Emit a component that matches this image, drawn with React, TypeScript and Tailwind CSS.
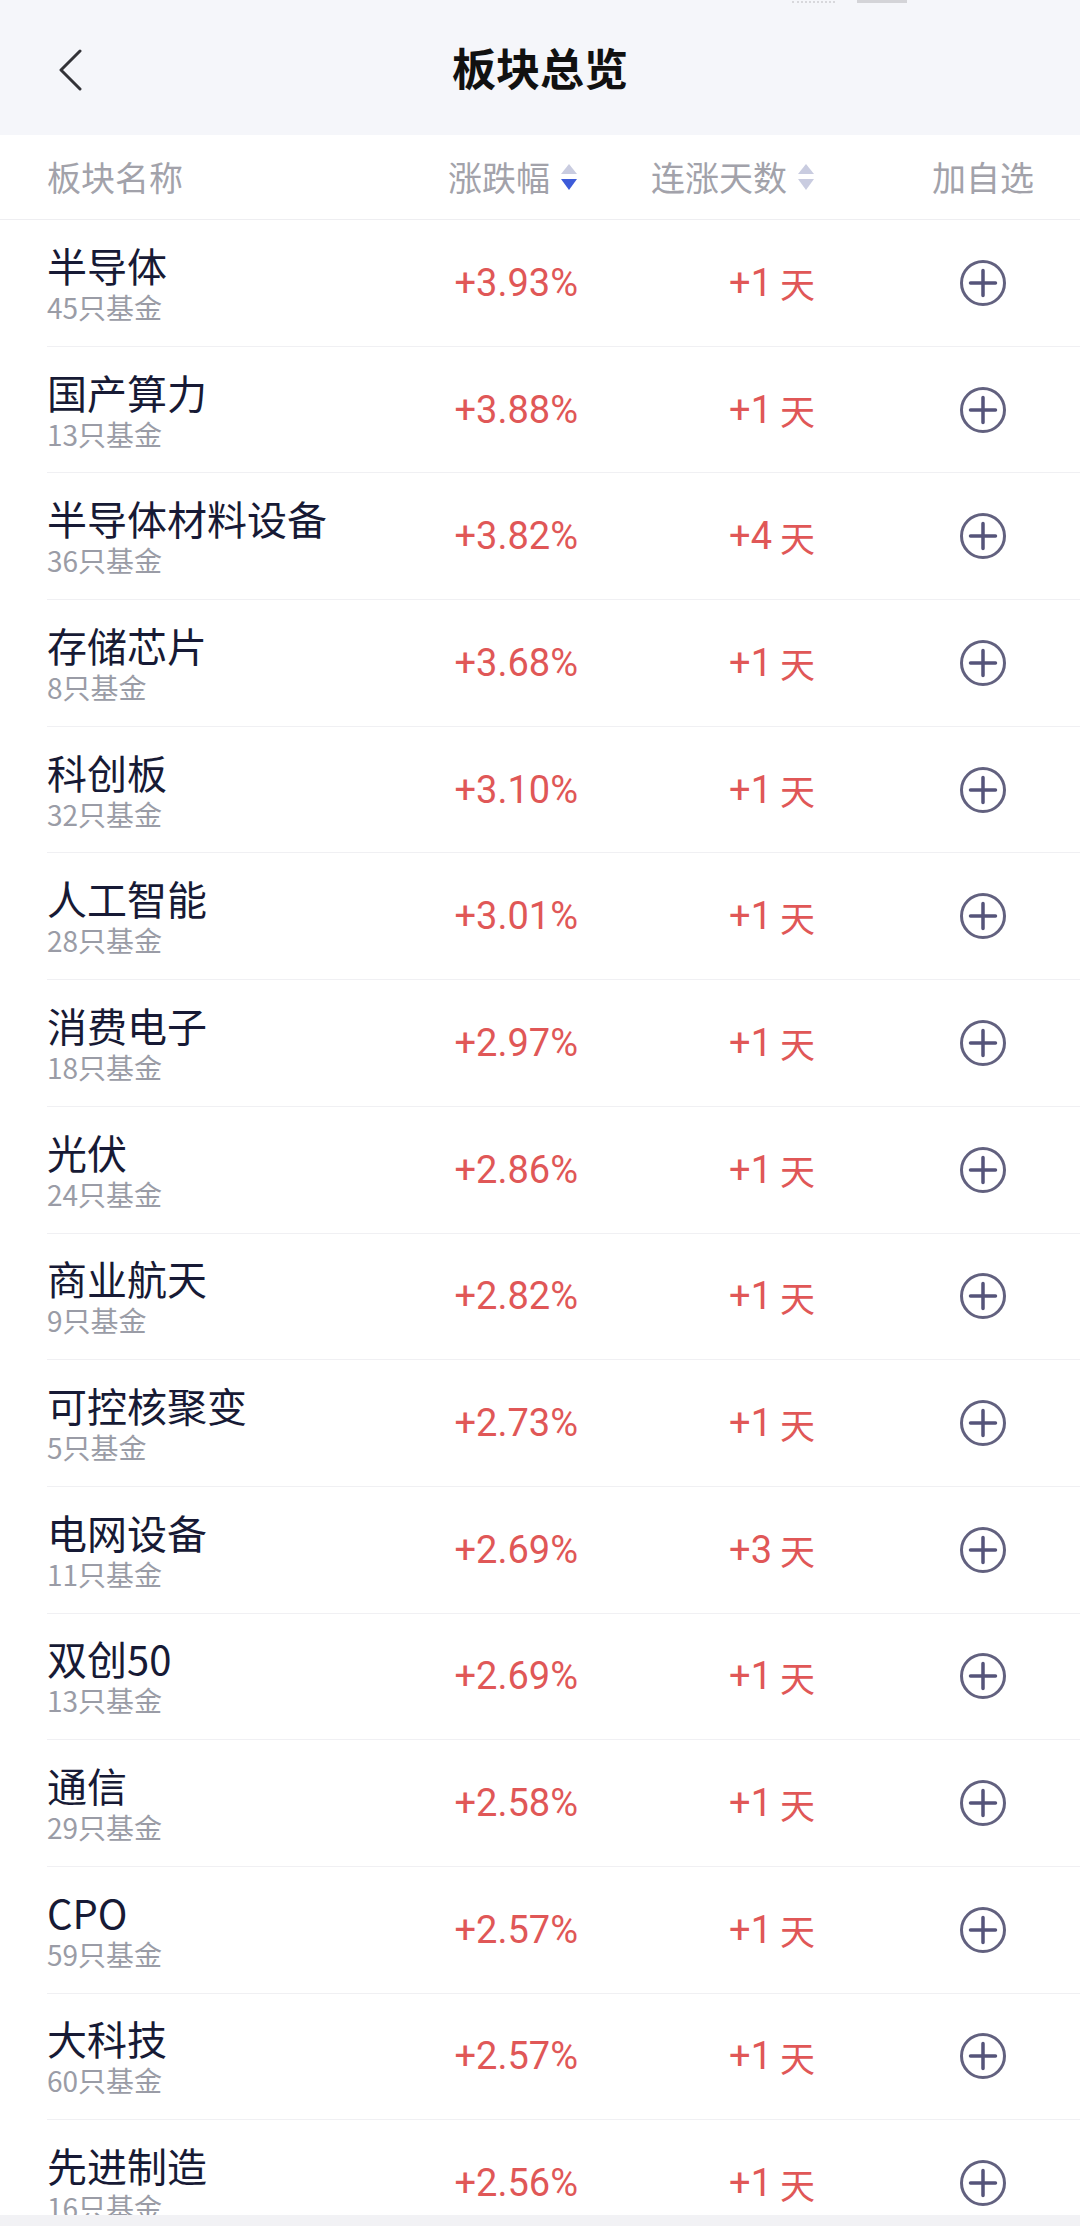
import React from 'react';

type Sector = { name: string; funds: number; change: string; days: number };

const sectors: Sector[] = [
  { name: '半导体', funds: 45, change: '+3.93%', days: 1 },
  { name: '国产算力', funds: 13, change: '+3.88%', days: 1 },
  { name: '半导体材料设备', funds: 36, change: '+3.82%', days: 4 },
  { name: '存储芯片', funds: 8, change: '+3.68%', days: 1 },
  { name: '科创板', funds: 32, change: '+3.10%', days: 1 },
  { name: '人工智能', funds: 28, change: '+3.01%', days: 1 },
  { name: '消费电子', funds: 18, change: '+2.97%', days: 1 },
  { name: '光伏', funds: 24, change: '+2.86%', days: 1 },
  { name: '商业航天', funds: 9, change: '+2.82%', days: 1 },
  { name: '可控核聚变', funds: 5, change: '+2.73%', days: 1 },
  { name: '电网设备', funds: 11, change: '+2.69%', days: 3 },
  { name: '双创50', funds: 13, change: '+2.69%', days: 1 },
  { name: '通信', funds: 29, change: '+2.58%', days: 1 },
  { name: 'CPO', funds: 59, change: '+2.57%', days: 1 },
  { name: '大科技', funds: 60, change: '+2.57%', days: 1 },
  { name: '先进制造', funds: 16, change: '+2.56%', days: 1 },
];

const cjk = "font-['Noto_Sans_CJK_SC',sans-serif]";
const num = "font-['Roboto','Noto_Sans_CJK_SC',sans-serif]";

// sort indicator: two stacked triangles, `active` = which one is blue
const SortArrows = ({ active }: { active?: 'up' | 'down' }) => (
  <svg width="18" height="26" viewBox="0 0 18 26" className="ml-[10px] shrink-0">
    <path d="M9 0 L17 10 L1 10 Z" fill={active === 'up' ? '#3d5bd9' : '#c9cce0'} />
    <path d="M1 15 L17 15 L9 26 Z" fill={active === 'down' ? '#3d5bd9' : '#c9cce0'} />
  </svg>
);

const PlusCircle = () => (
  <svg width="46" height="46" viewBox="0 0 46 46">
    <circle cx="23" cy="23" r="21.5" stroke="#62617f" strokeWidth="3" fill="none" />
    <path d="M23 10.5 V35.5 M10.5 23 H35.5" stroke="#55547a" strokeWidth="3.5" strokeLinecap="round" />
  </svg>
);

export default function App() {
  return (
    <div className={`w-[1080px] h-[2226px] overflow-hidden flex flex-col bg-white ${cjk}`}>
      {/* Nav bar */}
      <header className="h-[135px] shrink-0 bg-[#f5f6fa] flex flex-col">
        <div className="h-[4px] flex items-start">
          <div className="ml-[792px] w-[43px] h-[3px] border-b-2 border-dotted border-[#d8d8dc]" />
          <div className="ml-[22px] w-[50px] h-[3px] bg-[#d4d4d8]" />
        </div>
        <div className="flex-1 flex items-center relative">
          <button className="ml-[54px] w-[32px] h-[44px] flex items-center justify-center">
            <svg width="26" height="42" viewBox="0 0 26 42">
              <path d="M23 2 L4 21 L23 40" stroke="#333338" strokeWidth="3" fill="none" strokeLinecap="round" strokeLinejoin="round" />
            </svg>
          </button>
          <h1 className="flex-1 text-center text-[44px] leading-none font-semibold text-[#111] mr-[86px] -mt-[6px]">板块总览</h1>
        </div>
      </header>

      {/* Column headers */}
      <div className="h-[85px] shrink-0 flex items-center pl-[47px] pr-[46px] border-b border-[#eeeef1] text-[34px] leading-none text-[#a2a2aa]">
        <div className="flex-1">板块名称</div>
        <div className="w-[200px] flex items-center justify-end">
          涨跌幅
          <SortArrows active="down" />
        </div>
        <div className="w-[237px] flex items-center justify-end">
          连涨天数
          <SortArrows />
        </div>
        <div className="w-[219px] flex justify-end">
          <div className="w-[102px] text-center whitespace-nowrap">加自选</div>
        </div>
      </div>

      {/* Sector list */}
      <div className="flex-1 overflow-hidden">
        {sectors.map((s) => (
          <div key={s.name} className="pl-[47px]">
            <div className="h-[126.7px] flex items-center pr-[46px] border-b border-[#f0f0f3]">
              <div className="flex-1 flex flex-col">
                <span className="text-[40px] leading-[48px] text-[#171a35]">{s.name}</span>
                <span className="text-[28px] leading-[36px] text-[#9a9ca6]">{s.funds}只基金</span>
              </div>
              <div className={`w-[200px] text-right text-[38px] leading-none text-[#e05757] ${num}`}>{s.change}</div>
              <div className={`w-[237px] flex items-center justify-end text-[38px] leading-none text-[#e05757] ${num}`}>
                <span>+{s.days}</span>
                <span className={`ml-[8px] text-[35px] ${cjk}`}>天</span>
              </div>
              <div className="w-[219px] flex justify-end">
                <div className="w-[102px] flex justify-center">
                  <PlusCircle />
                </div>
              </div>
            </div>
          </div>
        ))}
      </div>

      <div className="h-[11px] shrink-0 bg-[#f2f2f5]" />
    </div>
  );
}
